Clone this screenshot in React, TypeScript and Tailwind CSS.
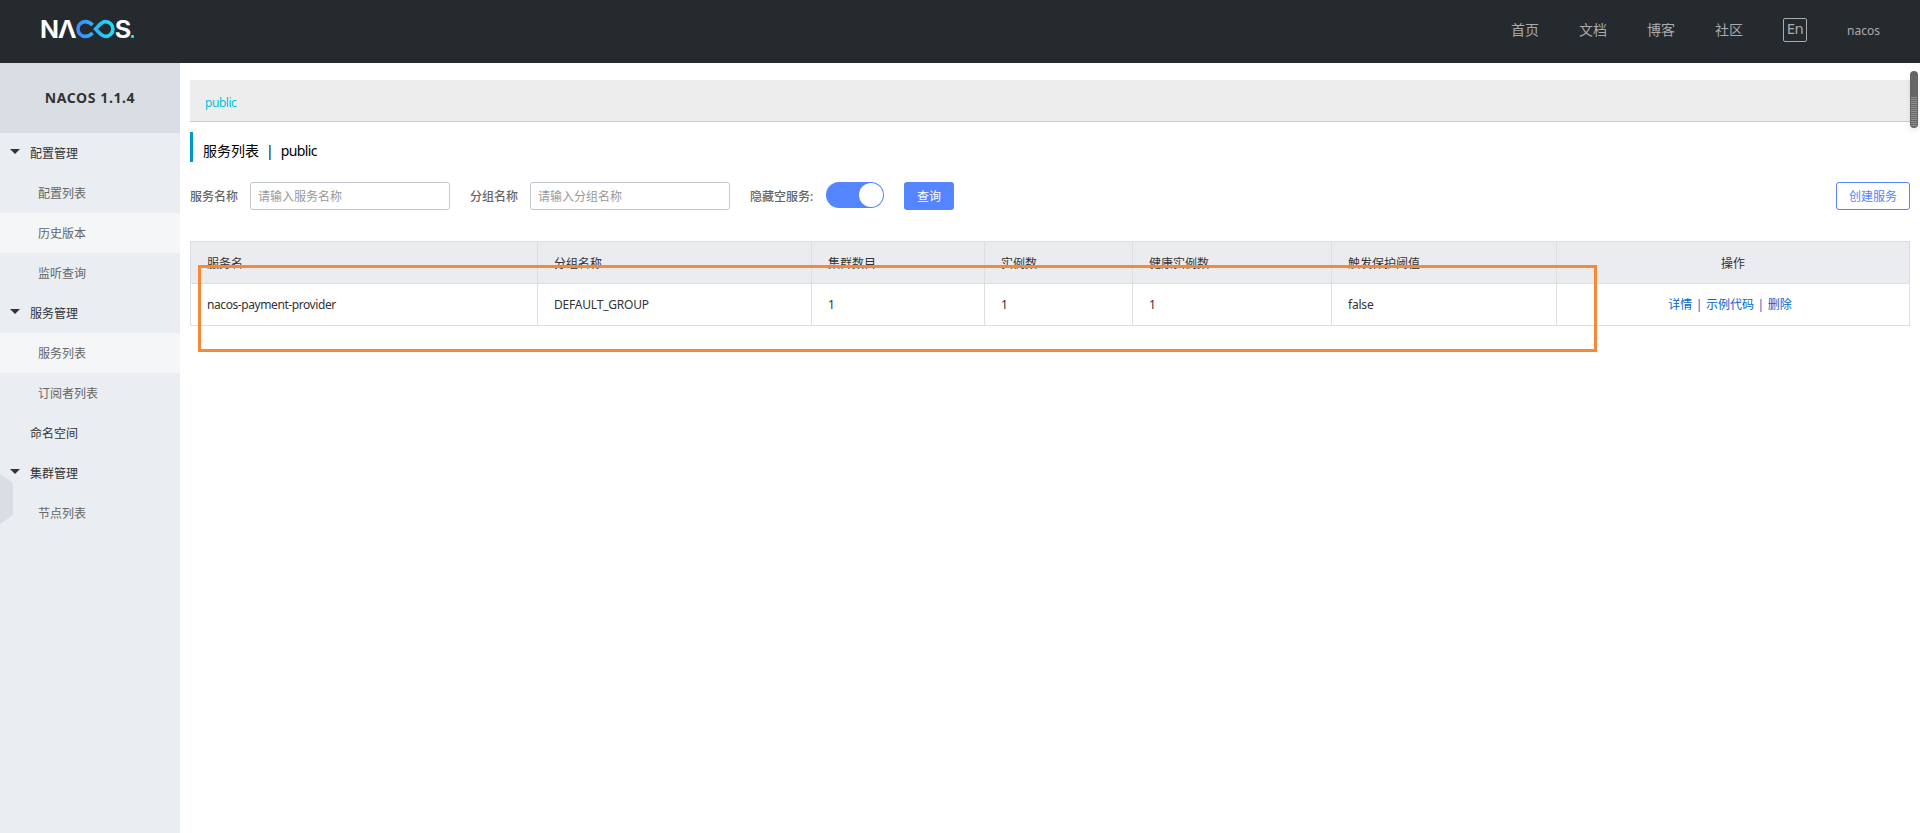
import { useState } from "react";
import clsx from "clsx";

const navLinks = [
  { name: "首页", path: "#/home" },
  { name: "文档", path: "#/docs" },
  { name: "博客", path: "#/blog" },
  { name: "社区", path: "#/community" },
];

const menu = [
  { name: "配置管理", group: true, arrow: true },
  { name: "配置列表" },
  { name: "历史版本", active: true },
  { name: "监听查询" },
  { name: "服务管理", group: true, arrow: true },
  { name: "服务列表", active: true },
  { name: "订阅者列表" },
  { name: "命名空间", group: true },
  { name: "集群管理", group: true, arrow: true },
  { name: "节点列表" },
];

const columns = ["服务名", "分组名称", "集群数目", "实例数", "健康实例数", "触发保护阈值"];

const services = [["nacos-payment-provider", "DEFAULT_GROUP", "1", "1", "1", "false"]];

function Logo() {
  return (
    <svg width="106" height="48" viewBox="-5 -12 106 48" className="mt-[5px] ml-[35px] shrink-0">
      <defs>
        <linearGradient id="loop" gradientUnits="userSpaceOnUse" x1="36" y1="0" x2="75" y2="0">
          <stop offset="0" stopColor="#3f86fb" />
          <stop offset="1" stopColor="#1ae3f3" />
        </linearGradient>
      </defs>
      <g fill="#fff" stroke="#fff" strokeWidth="0.2" fontFamily="Inter, sans-serif" fontWeight="600" fontSize="24">
        <text x="0" y="20.8" textLength="19" lengthAdjust="spacingAndGlyphs">N</text>
        <text x="18" y="20.8" textLength="18.5" lengthAdjust="spacingAndGlyphs">Λ</text>
        <text x="74.8" y="20.8" textLength="16.5" lengthAdjust="spacingAndGlyphs">S</text>
      </g>
      <g fill="none" stroke="url(#loop)" strokeWidth="3.6">
        <path d="M52.6 8C50 5.4 48 4.6 45.3 4.6A7.4 7.4 0 0 0 45.3 19.4C48 19.4 50 18.6 52.6 16" />
        <path d="M55.5 12C59 8.4 61.5 4.6 65.5 4.6A7.4 7.4 0 0 1 65.5 19.4C61.5 19.4 59 15.6 55.5 12Z" />
      </g>
      <rect x="91" y="18" width="3" height="3" rx="0.8" fill="#1ae3f3" />
    </svg>
  );
}

function Header() {
  return (
    <header className="flex h-[63px] justify-between bg-[#252a2f] text-[#a9abad]">
      <Logo />
      <nav className="flex h-[60px] items-center pr-10 text-sm">
        {navLinks.map((link) => (
          <a key={link.name} href={link.path} className="mr-10">
            {link.name}
          </a>
        ))}
        <span className="flex h-6 w-6 justify-center rounded-xs border border-[#a9abad] text-[15px] leading-[18px] tracking-[-0.4px]">
          En
        </span>
        <span className="mt-0.5 ml-10 text-xs">nacos</span>
      </nav>
    </header>
  );
}

function Sidebar() {
  return (
    <aside className="relative w-[180px] shrink-0 bg-[#eaedf1]">
      <h1 className="h-[70px] bg-[#d9dee4] text-center text-sm leading-[70px] font-bold tracking-[0.6px] text-[#333]">
        NACOS 1.1.4
      </h1>
      {/* Collapse handle */}
      <svg width="13" height="50" viewBox="0 0 13 50" className="absolute top-[411px] left-0">
        <path d="M0 0L13 9V41L0 50Z" fill="#d9dee4" />
      </svg>
      <ul className="relative text-xs">
        {menu.map((item) => (
          <li
            key={item.name}
            className={clsx(
              "flex h-10 items-center pt-0.5",
              item.group ? "pl-2.5 text-[#333]" : "pl-[38px] text-[#666]",
              item.active && "bg-[#f4f6f8]"
            )}
          >
            {item.group && (
              <span className="mr-2.5 flex w-2.5 pb-[5px]">
                {item.arrow && (
                  <svg width="10" height="5" viewBox="0 0 10 5">
                    <path d="M0 0H10L5 5Z" fill="#333" />
                  </svg>
                )}
              </span>
            )}
            {item.name}
          </li>
        ))}
      </ul>
    </aside>
  );
}

function SearchForm() {
  const [hideEmpty, setHideEmpty] = useState(true);

  return (
    <form className="mt-5 flex h-7 text-xs text-[#666]">
      <label className="w-[60px] leading-[30px] font-medium">服务名称</label>
      <input
        placeholder="请输入服务名称"
        className="mr-5 w-[200px] rounded-[3px] border border-[#c4c6cf] px-[7px] pt-0.5 placeholder:text-[#999]"
      />
      <label className="w-[60px] leading-[30px] font-medium">分组名称</label>
      <input
        placeholder="请输入分组名称"
        className="mr-5 w-[200px] rounded-[3px] border border-[#c4c6cf] px-[7px] pt-0.5 placeholder:text-[#999]"
      />
      <label className="w-[76px] leading-[30px] font-medium">隐藏空服务:</label>
      <button
        type="button"
        onClick={() => setHideEmpty(!hideEmpty)}
        className={clsx(
          "mr-5 flex h-[26px] w-[58px] items-center rounded-full p-px",
          hideEmpty ? "justify-end bg-[#5584ff]" : "justify-start bg-[#c4c6cf]"
        )}
      >
        <span className="h-6 w-6 rounded-full bg-white" />
      </button>
      <button type="button" className="w-[50px] rounded-[3px] bg-[#5584ff] pt-0.5 text-white">
        查询
      </button>
      <button
        type="button"
        className="ml-auto w-[74px] rounded-[3px] border border-[#5584ff] pt-0.5 text-[#5584ff]"
      >
        创建服务
      </button>
    </form>
  );
}

function ServiceTable() {
  return (
    <table className="mt-[31px] w-full table-fixed border-collapse text-xs text-[#333]">
      <colgroup>
        <col className="w-[347px]" />
        <col className="w-[274px]" />
        <col className="w-[173px]" />
        <col className="w-[148px]" />
        <col className="w-[199px]" />
        <col className="w-[225px]" />
        <col />
      </colgroup>
      <thead>
        <tr className="h-[42px] bg-[#ebecf0]">
          {columns.map((column) => (
            <th key={column} className="border border-[#dcdee3] px-4 pt-0.5 text-left font-normal">
              {column}
            </th>
          ))}
          <th className="border border-[#dcdee3] pt-0.5 font-normal">操作</th>
        </tr>
      </thead>
      <tbody>
        {services.map((row) => (
          <tr key={row[0]} className="h-[42px]">
            {row.map((cell, index) => (
              <td
                key={index}
                className={clsx(
                  "border border-[#dcdee3] px-4",
                  index === 0 ? "tracking-[-0.42px]" : "tracking-[-0.2px]"
                )}
              >
                {cell}
              </td>
            ))}
            <td className="border border-[#dcdee3] pt-px pr-1.5 text-center text-[#06c]">
              <a href="#detail">详情</a>
              <span className="mx-[3.5px]">|</span>
              <a href="#code">示例代码</a>
              <span className="mx-[3.5px]">|</span>
              <a href="#delete">删除</a>
            </td>
          </tr>
        ))}
      </tbody>
    </table>
  );
}

export default function App() {
  return (
    <div className="relative flex h-[833px] w-[1920px] flex-col overflow-hidden bg-white font-['Noto_Sans','Noto_Sans_CJK_SC',sans-serif]">
      <Header />
      <div className="flex grow">
        <Sidebar />
        <main className="grow px-2.5 pt-[17px]">
          <div className="h-[42px] border-b border-[#ccc] bg-[#ededed] pl-[15px] text-xs leading-[45px] tracking-[-0.45px] text-[#00c1de]">
            public
          </div>
          <h2 className="mt-2.5 h-[30px] border-l-3 border-[#09c] pl-2.5 text-sm leading-[38px] text-black">
            服务列表<span className="mx-[7px]">|</span>
            <span className="tracking-[-0.6px]">public</span>
          </h2>
          <SearchForm />
          <ServiceTable />
        </main>
      </div>

      {/* Highlight frame around the registered service */}
      <div className="absolute top-[265px] left-[198px] h-[87px] w-[1399px] border-3 border-[#f68839]" />

      {/* Floating level meter */}
      <div className="absolute top-[71px] left-[1910px] flex h-[57px] w-2 flex-col justify-end rounded-full bg-[#666] px-px pb-px shadow-md">
        <div className="h-[30px] rounded-b-full bg-[repeating-linear-gradient(to_bottom,#3fc463_0_1px,#666_1px_2px)]" />
      </div>
    </div>
  );
}
